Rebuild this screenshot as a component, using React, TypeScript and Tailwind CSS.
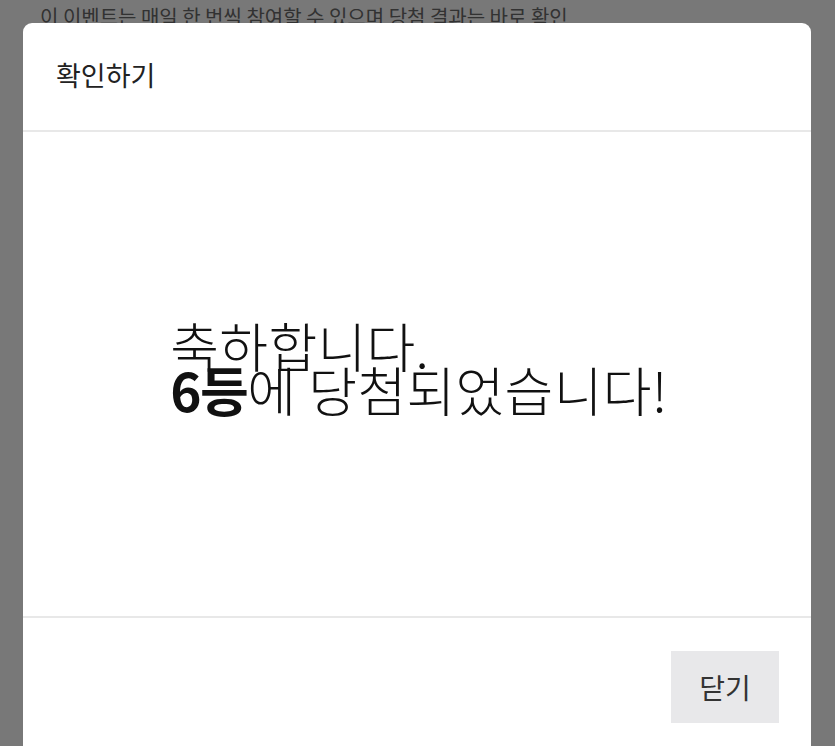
import React from 'react';

const font = { fontFamily: '"Noto Sans CJK KR", "Noto Sans", sans-serif' };

export default function App() {
  return (
    <div className="relative h-[746px] w-full overflow-hidden bg-white" style={font}>
      {/* page behind the dialog */}
      <div className="px-[40px] pt-[2px] text-[20px] leading-[30px] text-[#6a6a6a]">
        <p className="whitespace-nowrap">이 이벤트는 매일 한 번씩 참여할 수 있으며 당첨 결과는 바로 확인</p>
      </div>

      <div className="fixed inset-0 bg-black/[0.53]" />

      <div className="fixed left-[23px] right-[24px] top-[23px] flex flex-col rounded-t-[9px] bg-white">
        <div className="flex h-[109px] items-center border-b-2 border-[#e8e8e8] px-[33px]">
          <h2 className="pb-[2px] text-[27px] font-normal text-[#222]">확인하기</h2>
        </div>

        <div className="flex h-[486px] items-center justify-center border-b-2 border-[#e8e8e8] pb-[14px] pl-[4px]">
          <p className="text-left text-[53px] font-light leading-[44px] tracking-[0.3px] text-[#111]">
            축하합니다.
            <br />
            <span className="font-bold tracking-[-1.5px]">6등</span>에 당첨되었습니다!
          </p>
        </div>

        <div className="flex justify-end px-[32px] pt-[33px] pb-[40px]">
          <button className="h-[72px] w-[108px] bg-[#e8e8ea] text-[28px] text-[#333]">닫기</button>
        </div>
      </div>
    </div>
  );
}
